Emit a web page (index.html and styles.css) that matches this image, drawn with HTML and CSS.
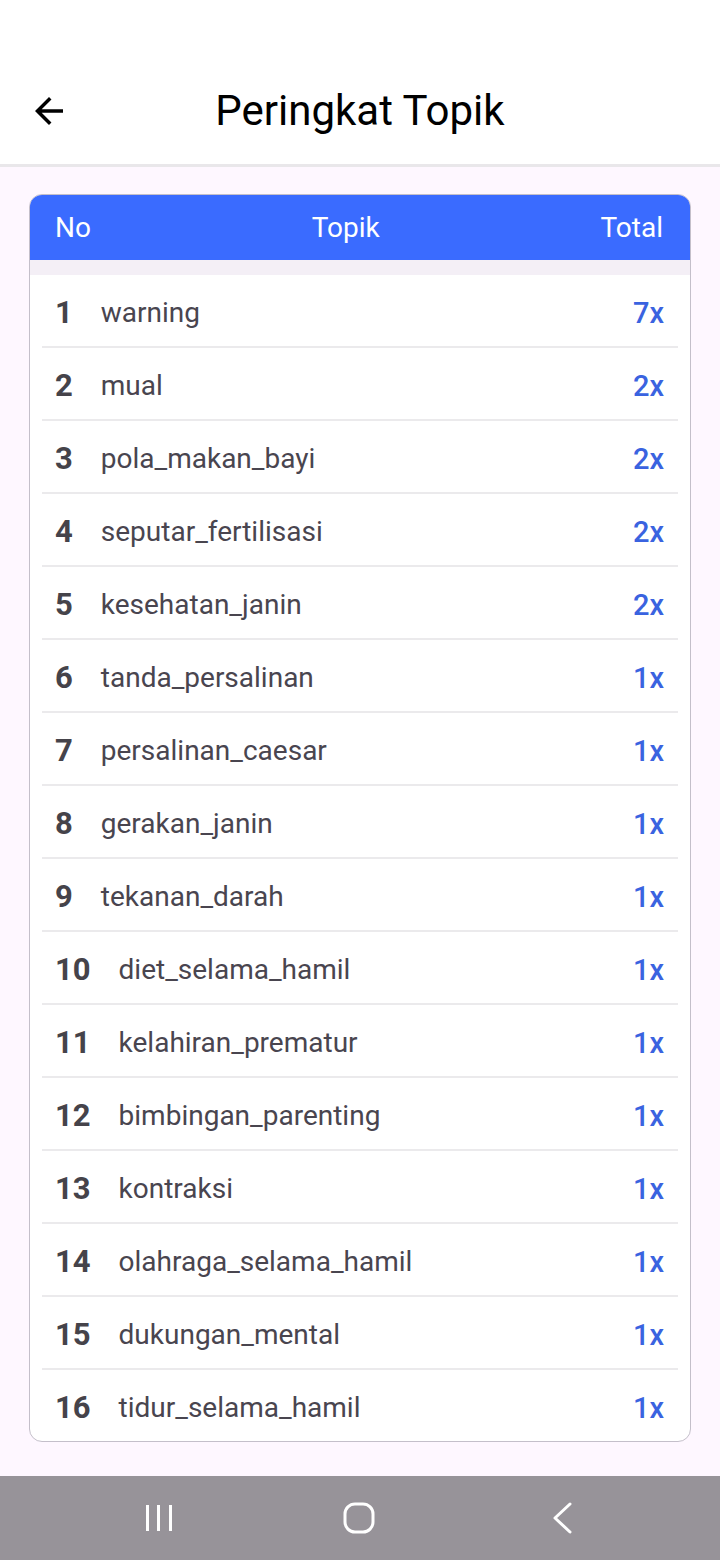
FILE: index.html
```html
<!DOCTYPE html>
<html lang="id">
<head>
<meta charset="utf-8">
<title>Peringkat Topik</title>
<link rel="stylesheet" href="styles.css">
</head>
<body>
<div class="screen">
  <header class="appbar">
    <button class="back" aria-label="Kembali">
      <svg viewBox="0 0 24 24" width="42" height="42"><path d="M20 11H7.83l5.59-5.59L12 4l-8 8 8 8 1.41-1.41L7.83 13H20v-2z" fill="#000"/></svg>
    </button>
    <h1 class="title">Peringkat Topik</h1>
  </header>
  <main class="content">
    <section class="card">
      <div class="thead">
        <span class="th-no">No</span>
        <span class="th-topic">Topik</span>
        <span class="th-total">Total</span>
      </div>
      <div class="band"></div>
      <ul class="rows">
        <li class="row"><span class="no">1</span><span class="topic">warning</span><span class="total">7x</span></li>
        <li class="row"><span class="no">2</span><span class="topic">mual</span><span class="total">2x</span></li>
        <li class="row"><span class="no">3</span><span class="topic">pola_makan_bayi</span><span class="total">2x</span></li>
        <li class="row"><span class="no">4</span><span class="topic">seputar_fertilisasi</span><span class="total">2x</span></li>
        <li class="row"><span class="no">5</span><span class="topic">kesehatan_janin</span><span class="total">2x</span></li>
        <li class="row"><span class="no">6</span><span class="topic">tanda_persalinan</span><span class="total">1x</span></li>
        <li class="row"><span class="no">7</span><span class="topic">persalinan_caesar</span><span class="total">1x</span></li>
        <li class="row"><span class="no">8</span><span class="topic">gerakan_janin</span><span class="total">1x</span></li>
        <li class="row"><span class="no">9</span><span class="topic">tekanan_darah</span><span class="total">1x</span></li>
        <li class="row"><span class="no">10</span><span class="topic">diet_selama_hamil</span><span class="total">1x</span></li>
        <li class="row"><span class="no">11</span><span class="topic">kelahiran_prematur</span><span class="total">1x</span></li>
        <li class="row"><span class="no">12</span><span class="topic">bimbingan_parenting</span><span class="total">1x</span></li>
        <li class="row"><span class="no">13</span><span class="topic">kontraksi</span><span class="total">1x</span></li>
        <li class="row"><span class="no">14</span><span class="topic">olahraga_selama_hamil</span><span class="total">1x</span></li>
        <li class="row"><span class="no">15</span><span class="topic">dukungan_mental</span><span class="total">1x</span></li>
        <li class="row"><span class="no">16</span><span class="topic">tidur_selama_hamil</span><span class="total">1x</span></li>
      </ul>
    </section>
  </main>
  <nav class="navbar">
    <svg class="nav-icon nav-recent" viewBox="0 0 30 30" width="30" height="30"><path d="M2.5 2v26M13.5 2v26M25.5 2v26" stroke="#fff" stroke-width="3" fill="none"/></svg>
    <svg class="nav-icon nav-home" viewBox="0 0 32 32" width="32" height="32"><rect x="2" y="2" width="28" height="28" rx="10" stroke="#fff" stroke-width="3" fill="none"/></svg>
    <svg class="nav-icon nav-back" viewBox="0 0 22 32" width="22" height="32"><path d="M19 2L4 16l15 14" stroke="#fff" stroke-width="3" fill="none" stroke-linecap="round" stroke-linejoin="round"/></svg>
  </nav>
</div>
</body>
</html>
```

FILE: styles.css
```css
* { box-sizing: border-box; }
html, body { margin: 0; padding: 0; }
body {
  font-family: Roboto, "Noto Sans", sans-serif;
  background: #fef7ff;
}
.screen {
  width: 720px;
  height: 1560px;
  display: flex;
  flex-direction: column;
  overflow: hidden;
}
.appbar {
  height: 167px;
  padding-top: 60px;
  background: #ffffff;
  border-bottom: 3px solid #e9e7ea;
  position: relative;
  display: flex;
  align-items: center;
  justify-content: center;
}
.back {
  position: absolute;
  left: 28px;
  top: 90px;
  width: 42px;
  height: 42px;
  padding: 0;
  border: 0;
  background: none;
  display: flex;
}
.title {
  margin: 0;
  font-size: 42px;
  font-weight: 400;
  color: #000;
  line-height: 1;
  padding-bottom: 2px;
}
.content {
  flex: 1;
  padding: 27px 29px 0;
}
.card {
  background: #ffffff;
  border: 1.5px solid #c4bfca;
  border-radius: 13px;
  overflow: hidden;
}
.thead {
  height: 65px;
  background: #3a6bff;
  color: #fff;
  font-size: 28px;
  display: flex;
  align-items: center;
  padding: 0 27px 0 25px;
}
.th-topic { flex: 1; text-align: center; }
.band {
  height: 15px;
  background: #f4eff6;
}
.rows {
  list-style: none;
  margin: 0;
  padding: 0 12px;
}
.row {
  height: 73px;
  display: flex;
  align-items: center;
  padding: 4px 14px 0 13px;
  border-bottom: 2px solid #ebeaec;
}
.row:last-child {
  height: 71px;
  border-bottom: 0;
}
.no {
  font-size: 31px;
  font-weight: 700;
  color: #45434a;
  margin-right: 28px;
}
.topic {
  flex: 1;
  font-size: 28px;
  color: #49454f;
}
.total {
  font-size: 29px;
  font-weight: 500;
  color: #3a63e0;
}
.navbar {
  height: 84px;
  background: #979399;
  display: flex;
  align-items: center;
  padding-left: 145px;
}
.nav-icon { display: block; flex: 0 0 auto; }
.nav-home { margin-left: 168px; }
.nav-back { margin-left: 176px; }
```
